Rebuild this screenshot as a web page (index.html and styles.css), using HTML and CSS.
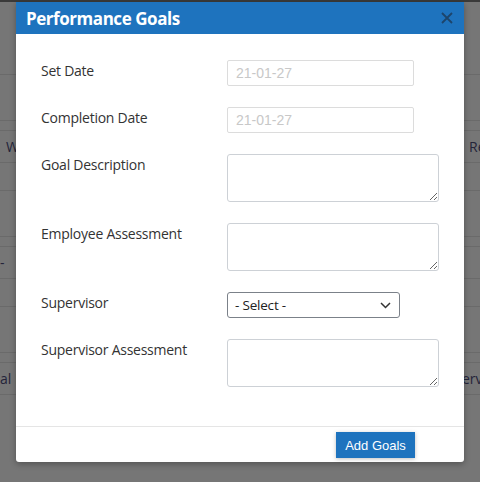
FILE: index.html
```html
<!DOCTYPE html>
<html>
<head>
<meta charset="utf-8">
<link rel="stylesheet" href="styles.css">
</head>
<body>
<div class="page">
  <div class="row tall"></div>
  <div class="row mid"></div>
  <div class="row thin"></div>
  <div class="row text"><span class="cell-left">W</span><span class="cell-right">Re</span></div>
  <div class="row short"></div>
  <div class="row mid"></div>
  <div class="row thin"></div>
  <div class="row text"><span class="cell-left shift">-</span><span class="cell-right"></span></div>
  <div class="row short"></div>
  <div class="row mid"></div>
  <div class="row thin"></div>
  <div class="row text"><span class="cell-left shift">al D</span><span class="cell-right shift2">erv</span></div>
</div>

<div class="modal">
  <div class="modal-header">
    <h2 class="modal-title">Performance Goals</h2>
    <button class="close" aria-label="Close">
      <svg width="12" height="12" viewBox="0 0 12 12"><path d="M1 1 L11 11 M11 1 L1 11" stroke="#1d456b" stroke-width="1.8" fill="none"/></svg>
    </button>
  </div>
  <div class="modal-body">
    <label class="lbl">Set Date</label>
    <div class="field"><input class="inp" type="text" value="21-01-27" disabled></div>

    <label class="lbl">Completion Date</label>
    <div class="field"><input class="inp" type="text" value="21-01-27" disabled></div>

    <label class="lbl">Goal Description</label>
    <div class="field"><textarea class="ta"></textarea></div>

    <label class="lbl">Employee Assessment</label>
    <div class="field"><textarea class="ta"></textarea></div>

    <label class="lbl">Supervisor</label>
    <div class="field">
      <div class="select-wrap">
        <select class="sel"><option>- Select -</option></select>
        <svg class="chev" width="11" height="7" viewBox="0 0 11 7"><path d="M1 1 L5.5 5.5 L10 1" stroke="#333" stroke-width="1.5" fill="none"/></svg>
      </div>
    </div>

    <label class="lbl">Supervisor Assessment</label>
    <div class="field"><textarea class="ta"></textarea></div>
  </div>
  <div class="modal-footer">
    <button class="btn">Add Goals</button>
  </div>
</div>
</body>
</html>
```

FILE: styles.css
```css
* { box-sizing: border-box; }
html, body { margin: 0; padding: 0; }
body {
  width: 480px;
  height: 482px;
  overflow: hidden;
  background: #767676;
  position: relative;
  font-family: "Open Sans", "Noto Sans", sans-serif;
}
.page {
  border-top: 2px solid #3a3a3a;
  display: flex;
  flex-direction: column;
}
.row {
  border-bottom: 1px solid #6a6a6a;
  display: flex;
  justify-content: space-between;
  align-items: center;
  font-size: 14px;
  color: #24243a;
}
.row.tall { height: 73px; }
.row.mid { height: 46px; }
.row.thin { height: 10px; }
.row.text { height: 32px; }
.row.short { height: 28px; }
.cell-left { padding-left: 6px; }
.cell-left.shift { padding-left: 0; }
.cell-right { width: 11px; overflow: hidden; white-space: nowrap; }
.cell-right.shift2 { width: 18px; }

.modal {
  position: absolute;
  left: 16px;
  top: 2px;
  width: 448px;
  height: 460px;
  background: #fff;
  border-radius: 0 0 3px 3px;
  box-shadow: 0 2px 6px rgba(0,0,0,0.3);
  display: flex;
  flex-direction: column;
}
.modal-header {
  height: 32px;
  background: #1e73be;
  display: flex;
  align-items: center;
  justify-content: space-between;
  padding: 0 11px 0 10px;
}
.modal-title {
  margin: 0;
  color: #fff;
  font-size: 17px;
  font-weight: 700;
  font-family: "Open Sans", "Noto Sans", sans-serif;
  letter-spacing: -0.45px;
}
.close {
  background: none;
  border: 0;
  padding: 0;
  width: 12px;
  height: 12px;
  display: flex;
}
.modal-body {
  flex: 1;
  display: grid;
  grid-template-columns: 186px 212px;
  row-gap: 21px;
  align-content: start;
  padding: 26px 0 0 25px;
}
.lbl {
  font-size: 14px;
  color: #333;
  line-height: 22px;
  letter-spacing: -0.25px;
}
.field { display: flex; }
.inp {
  width: 187px;
  height: 26px;
  border: 1px solid #dcdcdc;
  border-radius: 2px;
  background: #fff;
  padding: 0 8px;
  font-family: "Liberation Sans", Arial, sans-serif;
  font-size: 14px;
  color: #c8c8c8;
}
.ta {
  width: 212px;
  height: 48px;
  border: 1px solid #cdd1d6;
  border-radius: 3px;
  background: #fff;
  margin: 0;
  display: block;
}
.select-wrap {
  position: relative;
  width: 173px;
  height: 26px;
}
.sel {
  appearance: none;
  -webkit-appearance: none;
  width: 173px;
  height: 26px;
  border: 1px solid #7b8189;
  border-radius: 3px;
  background: #fff;
  padding: 0 0 0 7px;
  font-family: "Open Sans", "Noto Sans", sans-serif;
  font-size: 13.5px;
  letter-spacing: -0.2px;
  color: #222;
}
.chev {
  position: absolute;
  right: 9px;
  top: 10px;
}
.modal-footer {
  height: 36px;
  border-top: 1px solid #e5e5e5;
  display: flex;
  justify-content: flex-end;
  align-items: flex-start;
  padding: 5px 49px 0 0;
}
.btn {
  width: 79px;
  height: 26px;
  background: #1e73be;
  color: #fff;
  border: 0;
  font-family: "Liberation Sans", Arial, sans-serif;
  font-size: 13px;
  box-shadow: 0 1px 4px rgba(0,0,0,0.25);
  padding: 0;
}
```
